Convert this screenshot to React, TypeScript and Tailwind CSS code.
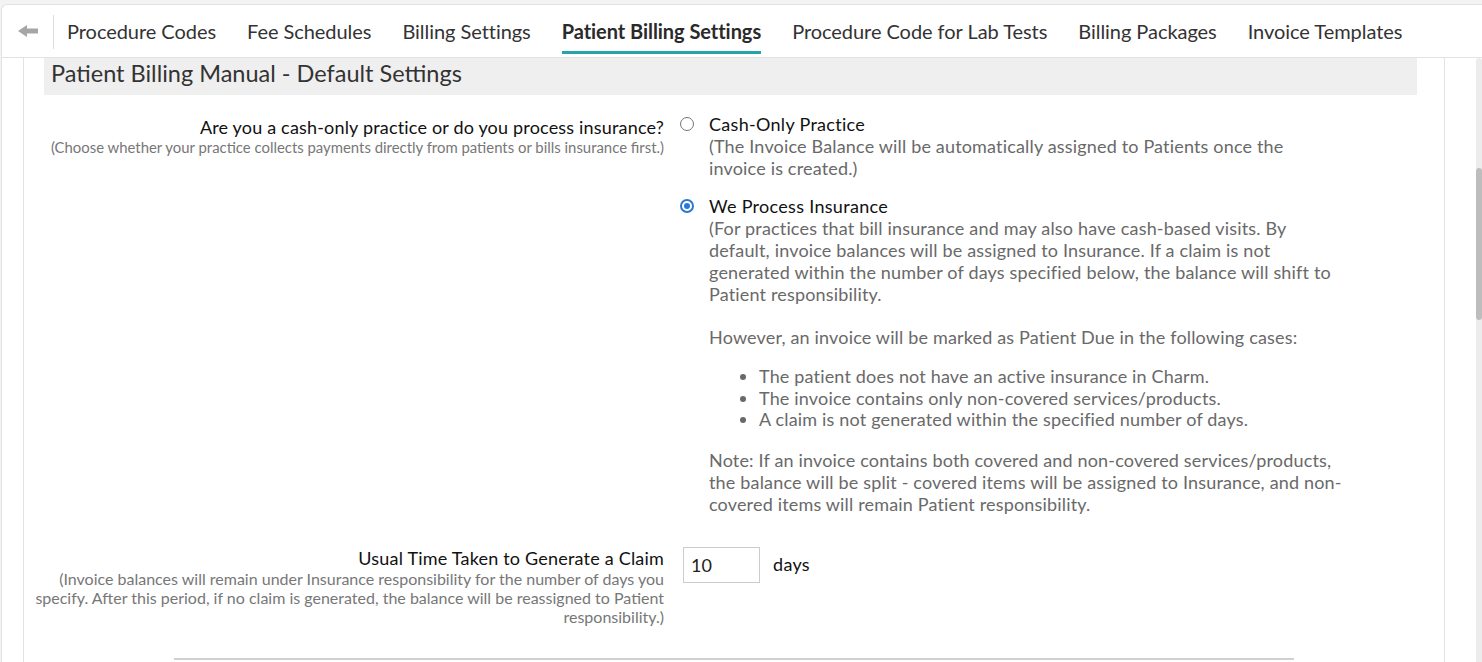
const tabs = [
  "Procedure Codes",
  "Fee Schedules",
  "Billing Settings",
  "Patient Billing Settings",
  "Procedure Code for Lab Tests",
  "Billing Packages",
  "Invoice Templates",
];

const Radio = ({ checked }: { checked?: boolean }) =>
  checked ? (
    <span className="flex h-[14px] w-[14px] items-center justify-center rounded-full border-2 border-[#2b78d4] bg-white">
      <span className="block h-[6px] w-[6px] rounded-full bg-[#2b78d4]" />
    </span>
  ) : (
    <span className="block h-[14px] w-[14px] rounded-full border border-[#767676] bg-white" />
  );

const App = () => {
  return (
    <div className="h-[662px] overflow-hidden bg-[#f2f3f5] pt-[4px] font-['Lato',sans-serif]">
      <div className="ml-px flex h-full flex-col rounded-tl-[6px] border-l border-t border-[#e2e2e2] bg-white">
        {/* tab bar */}
        <div className="flex h-[53px] items-stretch border-b border-[#e3e3e3] pl-[16px]">
          <div className="flex items-center">
            <svg width="20" height="12" viewBox="0 0 20 12">
              <polygon points="0,6 9,0 9,3.5 20,3.5 20,8.5 9,8.5 9,12" fill="#a6a6a6" />
            </svg>
          </div>
          <div className="ml-[15px] mt-[10px] h-[34px] w-px bg-[#dedede]" />
          <div className="ml-[13px] flex gap-[31px]">
            {tabs.map((t) => {
              const active = t === "Patient Billing Settings";
              return (
                <div
                  key={t}
                  className={
                    "mb-[3px] flex items-center border-b-[3px] pt-[6px] text-[20px] tracking-[-0.05px] " +
                    (active ? "border-[#26a4ac] font-bold text-[#2a2a2a]" : "border-transparent text-[#333]")
                  }
                >
                  {t}
                </div>
              );
            })}
          </div>
        </div>

        {/* body */}
        <div className="flex flex-1">
          <div className="w-[22px] border-r border-[#e3e3e3]" />
          <div className="flex flex-1 flex-col border-r border-[#e3e3e3]">
            <div className="ml-[20px] mr-[27px] h-[37px] bg-[#efefef] pl-[7px] pt-px text-[23.5px] leading-[28px] text-[#333]">
              Patient Billing Manual - Default Settings
            </div>

            {/* row 1 */}
            <div className="mt-[18px] flex items-start">
              <div className="w-[640px] pt-[3px] text-right">
                <div className="text-[18px] leading-[22px] tracking-[0.18px] text-[#111]">
                  Are you a cash-only practice or do you process insurance?
                </div>
                <div className="text-[14.9px] leading-[18px] text-[#777]">
                  (Choose whether your practice collects payments directly from patients or bills insurance first.)
                </div>
              </div>
              <div className="ml-[16px] flex flex-col gap-[16px] text-[18px] leading-[22px] tracking-[0.2px]">
                <div className="flex items-start gap-[15px]">
                  <div className="mt-[4px]">
                    <Radio />
                  </div>
                  <div className="whitespace-nowrap">
                    <div className="tracking-[0.3px] text-[#111]">Cash-Only Practice</div>
                    <div className="tracking-[0.17px] text-[#696969]">
                      (The Invoice Balance will be automatically assigned to Patients once the
                      <br />
                      invoice is created.)
                    </div>
                  </div>
                </div>
                <div className="flex items-start gap-[15px]">
                  <div className="mt-[4px]">
                    <Radio checked />
                  </div>
                  <div className="whitespace-nowrap tracking-[0.17px] text-[#696969]">
                    <div className="tracking-[0.3px] text-[#111]">We Process Insurance</div>
                    <p>
                      (For practices that bill insurance and may also have cash-based visits. By
                      <br />
                      default, invoice balances will be assigned to Insurance. If a claim is not
                      <br />
                      generated within the number of days specified below, the balance will shift to
                      <br />
                      Patient responsibility.
                    </p>
                    <p className="mt-[21px]">
                      However, an invoice will be marked as Patient Due in the following cases:
                    </p>
                    <ul className="mt-[18px] list-disc pl-[50px] leading-[21.5px]">
                      <li>The patient does not have an active insurance in Charm.</li>
                      <li>The invoice contains only non-covered services/products.</li>
                      <li>A claim is not generated within the specified number of days.</li>
                    </ul>
                    <p className="mt-[18px]">
                      Note: If an invoice contains both covered and non-covered services/products,
                      <br />
                      the balance will be split - covered items will be assigned to Insurance, and non-
                      <br />
                      covered items will remain Patient responsibility.
                    </p>
                  </div>
                </div>
              </div>
            </div>

            {/* row 2 */}
            <div className="mt-[32px] flex items-start">
              <div className="w-[640px] text-right">
                <div className="text-[18px] leading-[22px] tracking-[0.2px] text-[#111]">
                  Usual Time Taken to Generate a Claim
                </div>
                <div className="text-[16px] leading-[19px] text-[#777]">
                  (Invoice balances will remain under Insurance responsibility for the number of days you
                  <br />
                  specify. After this period, if no claim is generated, the balance will be reassigned to Patient
                  <br />
                  responsibility.)
                </div>
              </div>
              <input
                defaultValue="10"
                className="ml-[19px] h-[36px] w-[77px] border border-[#cccccc] px-[7px] text-[18px] text-[#222] outline-none"
              />
              <div className="ml-[13px] mt-[6px] text-[18px] leading-[22px] tracking-[0.3px] text-[#111]">days</div>
            </div>

            <div className="mx-auto mt-[32px] h-[2px] w-[1120px] shrink-0 bg-[#d0d0d0]" />
          </div>
          <div className="flex w-[37px] justify-end">
            <div className="w-[6px] rounded-t-[3px] bg-[#ececec] pt-[110px]">
              <div className="h-[152px] rounded-[3px] bg-[#bdbdbd]" />
            </div>
          </div>
        </div>
      </div>
    </div>
  );
};

export default App;
